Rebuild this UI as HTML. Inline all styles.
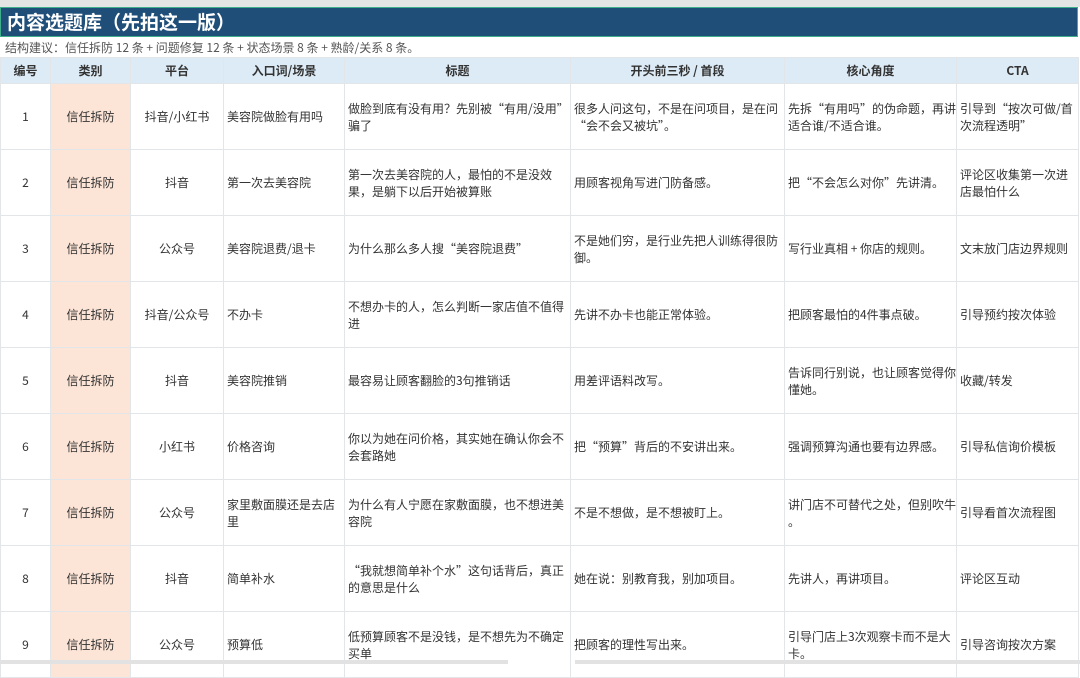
<!DOCTYPE html>
<html><head><meta charset="utf-8"><style>
*{margin:0;padding:0;box-sizing:border-box}
body{width:1080px;height:664px;overflow:hidden;background:#fff;font-family:"Noto Sans CJK SC","Liberation Sans",sans-serif;color:#333;position:relative}
.top{position:absolute;left:0;top:0;width:1080px;height:7px;background:#e4e4e4}
.title{position:absolute;left:0;top:7px;width:1078px;height:30px;background:#1f4e79;border:1px solid #3fae8a;color:#fff;font-weight:bold;font-size:19px;line-height:27px;padding-left:6px}
.sub{position:absolute;left:5px;top:38px;font-size:12px;line-height:19px;color:#555}
table{position:absolute;left:0;top:57px;border-collapse:collapse;table-layout:fixed;width:1078px;font-size:12px}
td,th{border:1px solid #e3e6e8;vertical-align:middle;line-height:17px;padding:0 3px;overflow:hidden;white-space:nowrap}
th{background:#ddebf7;height:26px;font-weight:bold;color:#333;text-align:center}
td{height:66px}
td.c{text-align:center}
td.k{background:#fce4d6;text-align:center}
.sb1{position:absolute;left:0;top:660px;width:508px;height:4px;background:#e2e2e2}
.sb2{position:absolute;left:575px;top:660px;width:505px;height:4px;background:#e2e2e2}
</style></head><body>
<div class="top"></div>
<div class="title">内容选题库（先拍这一版）</div>
<div class="sub">结构建议：信任拆防 12 条 + 问题修复 12 条 + 状态场景 8 条 + 熟龄/关系 8 条。</div>
<table>
<colgroup><col style="width:50px"><col style="width:80px"><col style="width:93px"><col style="width:121px"><col style="width:226px"><col style="width:214px"><col style="width:172px"><col style="width:122px"></colgroup>
<tr><th>编号</th><th>类别</th><th>平台</th><th>入口词/场景</th><th>标题</th><th>开头前三秒 / 首段</th><th>核心角度</th><th>CTA</th></tr>
<tr><td class="c">1</td><td class="k">信任拆防</td><td class="c">抖音/小红书</td><td>美容院做脸有用吗</td><td>做脸到底有没有用？先别被“有用/没用”<br>骗了</td><td>很多人问这句，不是在问项目，是在问<br>“会不会又被坑”。</td><td>先拆“有用吗”的伪命题，再讲<br>适合谁/不适合谁。</td><td>引导到“按次可做/首<br>次流程透明”</td></tr>
<tr><td class="c">2</td><td class="k">信任拆防</td><td class="c">抖音</td><td>第一次去美容院</td><td>第一次去美容院的人，最怕的不是没效<br>果，是躺下以后开始被算账</td><td>用顾客视角写进门防备感。</td><td>把“不会怎么对你”先讲清。</td><td>评论区收集第一次进<br>店最怕什么</td></tr>
<tr><td class="c">3</td><td class="k">信任拆防</td><td class="c">公众号</td><td>美容院退费/退卡</td><td>为什么那么多人搜“美容院退费”</td><td>不是她们穷，是行业先把人训练得很防<br>御。</td><td>写行业真相 + 你店的规则。</td><td>文末放门店边界规则</td></tr>
<tr><td class="c">4</td><td class="k">信任拆防</td><td class="c">抖音/公众号</td><td>不办卡</td><td>不想办卡的人，怎么判断一家店值不值得<br>进</td><td>先讲不办卡也能正常体验。</td><td>把顾客最怕的4件事点破。</td><td>引导预约按次体验</td></tr>
<tr><td class="c">5</td><td class="k">信任拆防</td><td class="c">抖音</td><td>美容院推销</td><td>最容易让顾客翻脸的3句推销话</td><td>用差评语料改写。</td><td>告诉同行别说，也让顾客觉得你<br>懂她。</td><td>收藏/转发</td></tr>
<tr><td class="c">6</td><td class="k">信任拆防</td><td class="c">小红书</td><td>价格咨询</td><td>你以为她在问价格，其实她在确认你会不<br>会套路她</td><td>把“预算”背后的不安讲出来。</td><td>强调预算沟通也要有边界感。</td><td>引导私信询价模板</td></tr>
<tr><td class="c">7</td><td class="k">信任拆防</td><td class="c">公众号</td><td>家里敷面膜还是去店<br>里</td><td>为什么有人宁愿在家敷面膜，也不想进美<br>容院</td><td>不是不想做，是不想被盯上。</td><td>讲门店不可替代之处，但别吹牛<br>。</td><td>引导看首次流程图</td></tr>
<tr><td class="c">8</td><td class="k">信任拆防</td><td class="c">抖音</td><td>简单补水</td><td>“我就想简单补个水”这句话背后，真正<br>的意思是什么</td><td>她在说：别教育我，别加项目。</td><td>先讲人，再讲项目。</td><td>评论区互动</td></tr>
<tr><td class="c">9</td><td class="k">信任拆防</td><td class="c">公众号</td><td>预算低</td><td>低预算顾客不是没钱，是不想先为不确定<br>买单</td><td>把顾客的理性写出来。</td><td>引导门店上3次观察卡而不是大<br>卡。</td><td>引导咨询按次方案</td></tr>
</table>
<div class="sb1"></div><div class="sb2"></div>
</body></html>
